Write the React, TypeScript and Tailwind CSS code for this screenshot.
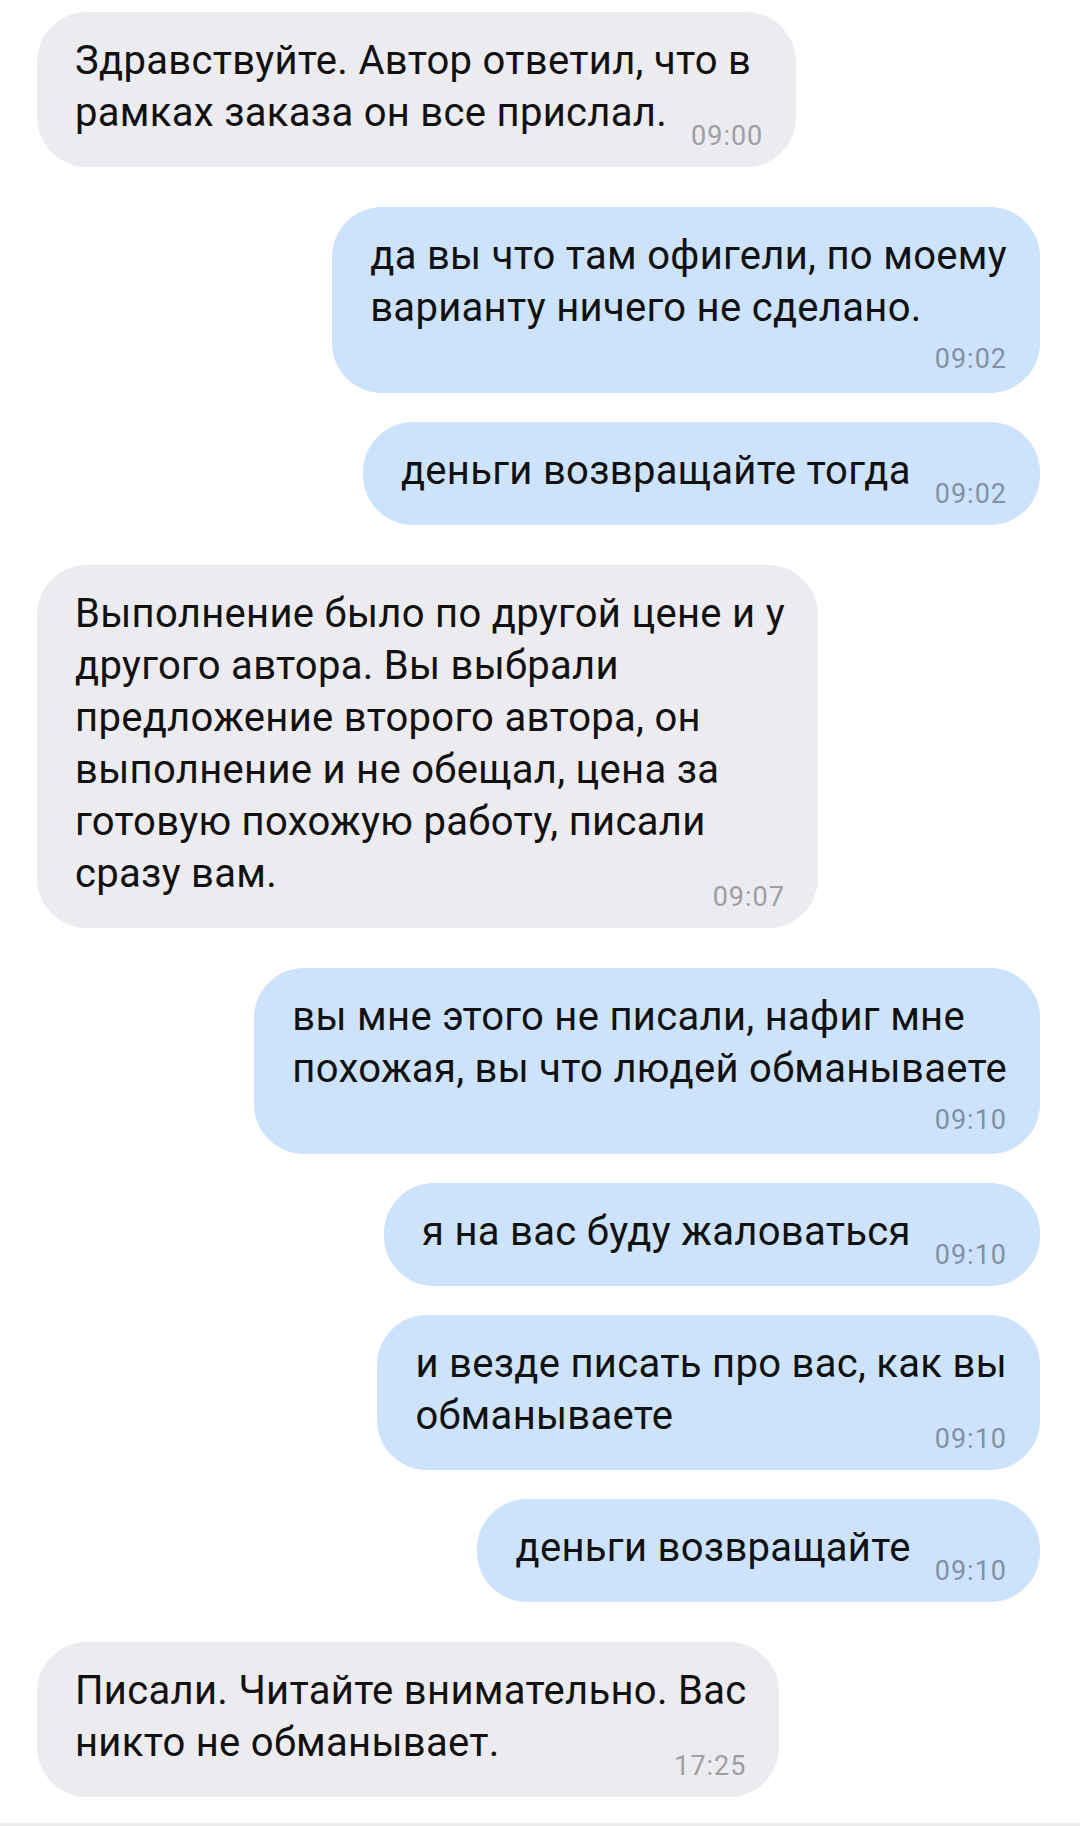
const messages = [
  { out: false, lines: ['Здравствуйте. Автор ответил, что в', 'рамках заказа он все прислал.'], time: '09:00' },
  { out: true, lines: ['да вы что там офигели, по моему', 'варианту ничего не сделано.'], time: '09:02', below: true },
  { out: true, lines: ['деньги возвращайте тогда'], time: '09:02' },
  {
    out: false,
    lines: [
      'Выполнение было по другой цене и у',
      'другого автора. Вы выбрали',
      'предложение второго автора, он',
      'выполнение и не обещал, цена за',
      'готовую похожую работу, писали',
      'сразу вам.',
    ],
    time: '09:07',
  },
  { out: true, lines: ['вы мне этого не писали, нафиг мне', 'похожая, вы что людей обманываете'], time: '09:10', below: true },
  { out: true, lines: ['я на вас буду жаловаться'], time: '09:10' },
  { out: true, lines: ['и везде писать про вас, как вы', 'обманываете'], time: '09:10' },
  { out: true, lines: ['деньги возвращайте'], time: '09:10' },
  { out: false, lines: ['Писали. Читайте внимательно. Вас', 'никто не обманывает.'], time: '17:25' },
]

type Msg = (typeof messages)[number] & { below?: boolean }

const Bubble = ({ msg }: { msg: Msg }) => {
  const timeColor = msg.out ? 'text-[#8091a6]' : 'text-[#9e9ea4]'
  const last = msg.lines.length - 1
  return (
    <div
      className={`w-fit rounded-[50px] pl-[38px] pr-[33px] pt-[23px] pb-[28px] text-[40px] leading-[52px] tracking-[0.3px] text-[#111111] ${
        msg.out ? 'self-end bg-[#cde3fc]' : 'self-start bg-[#ebebf0]'
      }`}
    >
      {msg.lines.map((line, i) =>
        i === last && !msg.below ? (
          <div key={i} className="flex items-baseline justify-between gap-[24px] whitespace-nowrap">
            <span>{line}</span>
            <span className={`relative top-[19px] text-[27px] leading-none tracking-[1px] ${timeColor}`}>{msg.time}</span>
          </div>
        ) : (
          <div key={i} className="whitespace-nowrap">
            {line}
          </div>
        )
      )}
      {msg.below && (
        <div className={`relative top-[7px] mt-[6px] text-right text-[27px] leading-[25px] tracking-[1px] ${timeColor}`}>
          {msg.time}
        </div>
      )}
    </div>
  )
}

export default function App() {
  return (
    <div className="flex h-[1826px] w-[1080px] flex-col bg-white font-['Roboto',sans-serif]">
      <div className="flex flex-1 flex-col pl-[37px] pr-[40px] pt-[12px]">
        {messages.map((msg, i) => {
          const prev = messages[i - 1]
          const gap = !prev ? '' : prev.out === msg.out ? 'mt-[29px]' : 'mt-[40px]'
          return (
            <div key={i} className={`flex flex-col ${gap}`}>
              <Bubble msg={msg} />
            </div>
          )
        })}
      </div>
      <div className="h-[3px] bg-[#ececec]" />
    </div>
  )
}
